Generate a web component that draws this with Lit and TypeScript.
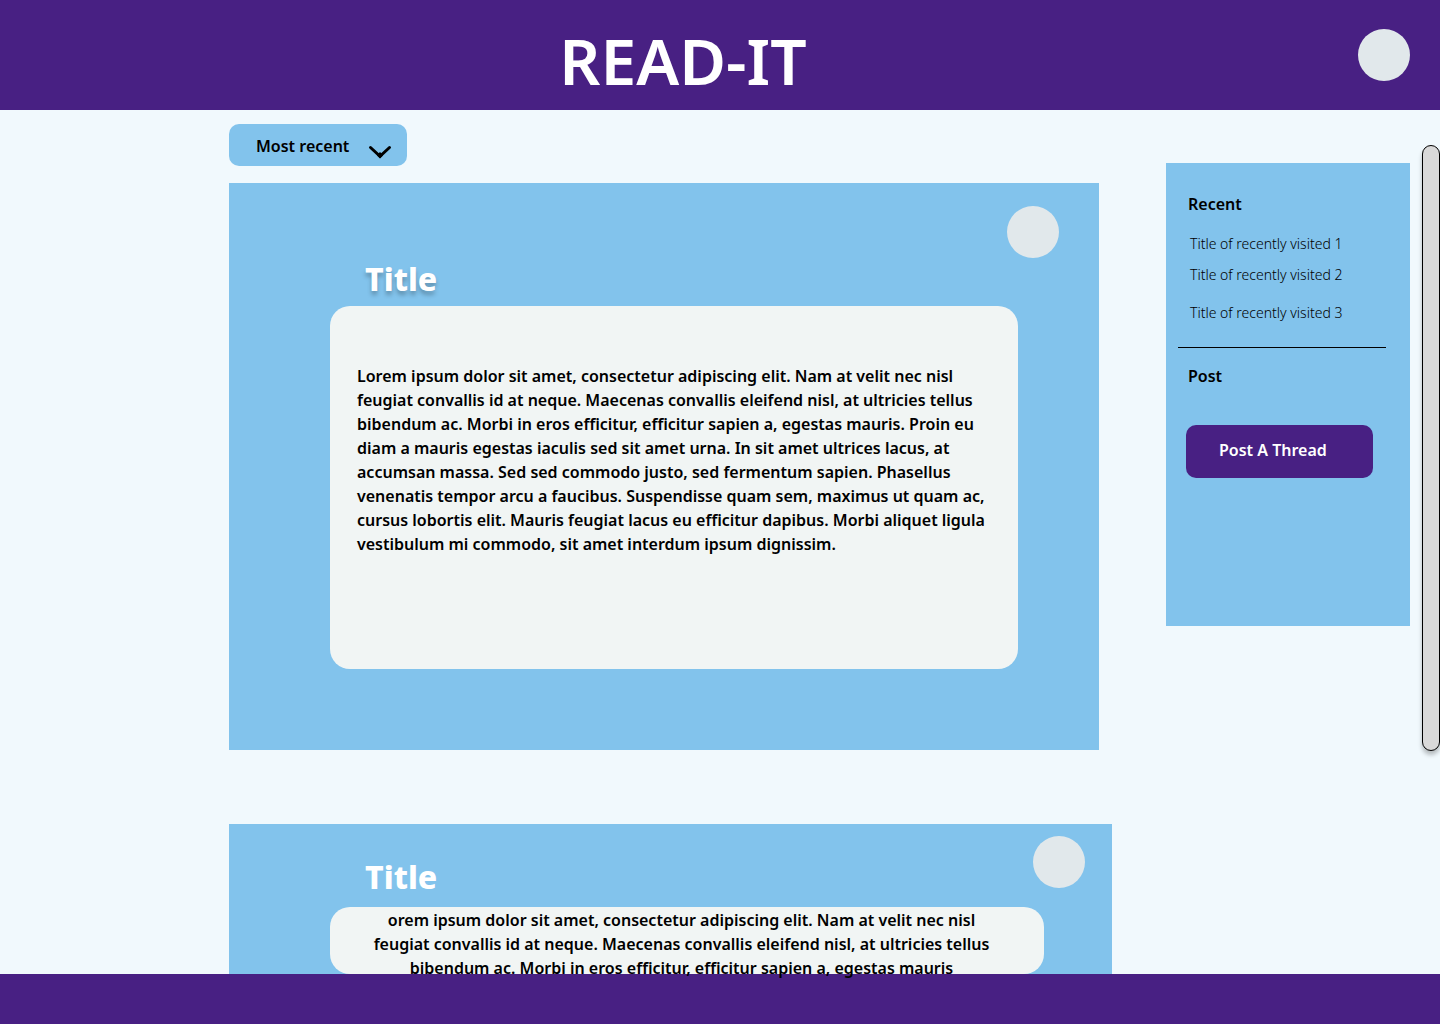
import { LitElement, html, css } from "lit";
import { customElement, property } from "lit/decorators.js";

const FONT = css`"Noto Sans", "Open Sans", "Liberation Sans", sans-serif`;

const FIRST_POST = [
  "Lorem ipsum dolor sit amet, consectetur adipiscing elit. Nam at velit nec nisl",
  "feugiat convallis id at neque. Maecenas convallis eleifend nisl, at ultricies tellus",
  "bibendum ac. Morbi in eros efficitur, efficitur sapien a, egestas mauris. Proin eu",
  "diam a mauris egestas iaculis sed sit amet urna. In sit amet ultrices lacus, at",
  "accumsan massa. Sed sed commodo justo, sed fermentum sapien. Phasellus",
  "venenatis tempor arcu a faucibus. Suspendisse quam sem, maximus ut quam ac,",
  "cursus lobortis elit. Mauris feugiat lacus eu efficitur dapibus. Morbi aliquet ligula",
  "vestibulum mi commodo, sit amet interdum ipsum dignissim.",
].join("\n");

const SECOND_POST = [
  "orem ipsum dolor sit amet, consectetur adipiscing elit. Nam at velit nec nisl",
  "feugiat convallis id at neque. Maecenas convallis eleifend nisl, at ultricies tellus",
  "bibendum ac. Morbi in eros efficitur, efficitur sapien a, egestas mauris",
].join("\n");

@customElement("thread-card")
export class ThreadCard extends LitElement {
  @property() heading = "";
  @property() body = "";
  @property({ type: Boolean, reflect: true }) preview = false;

  static styles = css`
    :host {
      display: block;
    }
    .card {
      background: #82c3ec;
      padding: 23px 40px 81px 101px;
    }
    .head {
      display: flex;
      justify-content: space-between;
      align-items: flex-end;
      min-height: 100px;
    }
    .title {
      margin: 0;
      padding: 0 0 3px 35px;
      color: #fff;
      font-size: 32px;
      font-weight: 800;
      line-height: 48px;
      text-shadow: 0 4px 4px rgba(0, 0, 0, 0.25);
    }
    .avatar {
      align-self: flex-start;
      width: 52px;
      height: 52px;
      border-radius: 50%;
      background: #e1e8eb;
    }
    .panel {
      box-sizing: border-box;
      min-height: 363px;
      margin-right: 41px;
      padding: 58px 0 0 27px;
      border-radius: 20px;
      background: #f1f5f4;
    }
    .text {
      margin: 0;
      font-size: 16px;
      font-weight: 600;
      line-height: 24px;
      white-space: pre;
    }
    :host([preview]) .card {
      padding: 12px 27px 0 101px;
    }
    :host([preview]) .head {
      min-height: 71px;
    }
    :host([preview]) .title {
      padding-bottom: 6px;
      text-shadow: none;
    }
    :host([preview]) .panel {
      min-height: 0;
      height: 67px;
      padding: 1px 38px 0 27px;
    }
    :host([preview]) .text {
      position: relative;
      z-index: 1;
      text-align: center;
    }
  `;

  render() {
    return html`
      <article class="card">
        <header class="head">
          <h2 class="title">${this.heading}</h2>
          <span class="avatar"></span>
        </header>
        <div class="panel"><p class="text">${this.body}</p></div>
      </article>
    `;
  }
}

@customElement("side-panel")
export class SidePanel extends LitElement {
  static styles = css`
    :host {
      display: block;
      box-sizing: border-box;
      min-height: 463px;
      padding: 29px 24px 0 12px;
      background: #82c3ec;
    }
    .heading {
      margin: 0 0 0 10px;
      font-size: 16px;
      font-weight: 600;
      line-height: 24px;
    }
    .list {
      display: flex;
      flex-direction: column;
      gap: 7px;
      margin: 0;
      padding: 16px 0 22px 12px;
      list-style: none;
    }
    .item {
      font-size: 14px;
      font-weight: 300;
      line-height: 24px;
    }
    .item:last-child {
      padding-top: 7px;
    }
    .link {
      color: #000;
      text-decoration: none;
    }
    .rule {
      margin: 0 0 16px;
      border: 0;
      border-top: 1px solid #000;
    }
    .post {
      display: block;
      width: 187px;
      height: 53px;
      margin: 37px 0 0 8px;
      padding: 0 0 4px 33px;
      border: 0;
      border-radius: 10px;
      background: #482083;
      color: #fff;
      font-family: ${FONT};
      font-size: 16px;
      font-weight: 600;
      text-align: left;
      cursor: pointer;
    }
  `;

  render() {
    return html`
      <h2 class="heading">Recent</h2>
      <ul class="list">
        ${[1, 2, 3].map(
          (n) => html`<li class="item"><a class="link" href="#recent-${n}">Title of recently visited ${n}</a></li>`
        )}
      </ul>
      <hr class="rule" />
      <h2 class="heading">Post</h2>
      <button class="post" type="button">Post A Thread</button>
    `;
  }
}

@customElement("app-root")
export class AppRoot extends LitElement {
  static styles = css`
    :host {
      display: flex;
      flex-direction: column;
      min-height: 100vh;
      background: #f1f9fd;
      color: #000;
      font-family: ${FONT};
    }
    .top {
      box-sizing: border-box;
      display: flex;
      align-items: center;
      min-height: 110px;
      padding: 0 30px 0 8px;
      background: #482083;
    }
    .brand {
      flex: 1;
      margin: 0;
      padding-top: 12px;
      color: #fff;
      font-size: 64px;
      font-weight: 600;
      line-height: 94px;
      text-align: center;
    }
    .avatar {
      width: 52px;
      height: 52px;
      border-radius: 50%;
      background: #e1e8eb;
    }
    .main {
      flex: 1;
      display: grid;
      grid-template-columns: minmax(0, 1fr) 244px 12px 18px;
      align-items: start;
      padding-left: 229px;
    }
    .feed {
      display: flex;
      flex-direction: column;
      margin-right: 54px;
      padding-top: 14px;
    }
    .sort {
      display: grid;
      align-self: flex-start;
      align-items: center;
      width: 178px;
      margin-bottom: 17px;
    }
    .select {
      grid-area: 1 / 1;
      appearance: none;
      width: 100%;
      height: 42px;
      padding: 2px 44px 0 27px;
      border: 0;
      border-radius: 10px;
      background: #82c3ec;
      color: #000;
      font-family: ${FONT};
      font-size: 16px;
      font-weight: 600;
    }
    .chevron {
      grid-area: 1 / 1;
      justify-self: end;
      width: 24px;
      height: 16px;
      margin: 14px 15px 0 0;
      pointer-events: none;
    }
    .first {
      margin: 0 13px 74px 0;
    }
    .side {
      margin-top: 53px;
    }
    .track {
      grid-column: 4;
      box-sizing: border-box;
      height: 606px;
      margin-top: 35px;
      border: 1px solid #000;
      border-radius: 9px;
      background: #d9d9d9;
      box-shadow: 0 4px 4px rgba(0, 0, 0, 0.25);
    }
    .bottom {
      height: 50px;
      background: #482083;
    }
  `;

  render() {
    return html`
      <header class="top">
        <h1 class="brand">READ-IT</h1>
        <span class="avatar"></span>
      </header>
      <main class="main">
        <section class="feed">
          <div class="sort">
            <select class="select" aria-label="Sort threads">
              <option>Most recent</option>
            </select>
            <svg class="chevron" viewBox="0 0 24 16" aria-hidden="true">
              <path d="M2.5 3.5 L12 12.3 L21.5 3.5" fill="none" stroke="#000" stroke-width="3" stroke-linecap="round" />
              <path d="M10 10 L12 8 L14 10 L15 11.5 L12 14.6 L9 11.5 Z" />
            </svg>
          </div>
          <thread-card class="first" heading="Title" .body=${FIRST_POST}></thread-card>
          <thread-card preview heading="Title" .body=${SECOND_POST}></thread-card>
        </section>
        <side-panel class="side"></side-panel>
        <div class="track"></div>
      </main>
      <footer class="bottom"></footer>
    `;
  }
}
